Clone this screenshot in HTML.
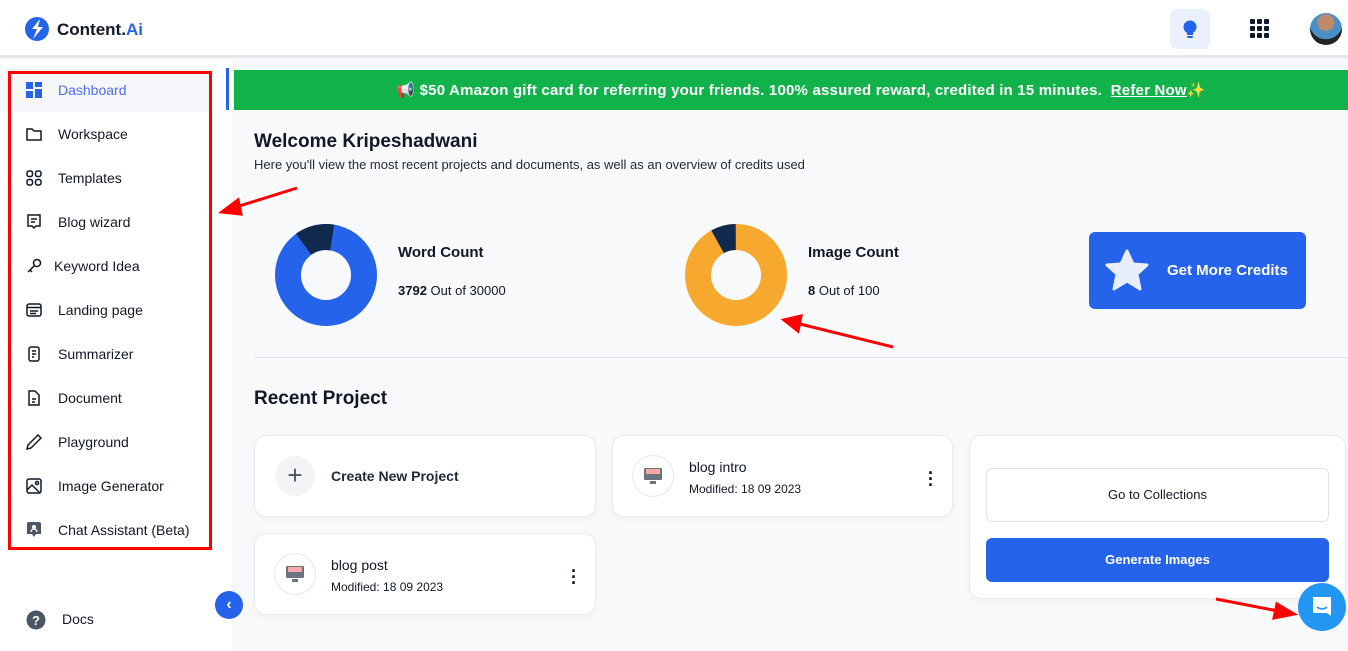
<!DOCTYPE html>
<html><head><style>
*{box-sizing:border-box;margin:0;padding:0}
body{width:1348px;height:651px;overflow:hidden;font-family:"Liberation Sans",sans-serif;background:#f8f9fb;position:relative;color:#111827}
.abs{position:absolute}
.hdr{left:0;top:0;width:1348px;height:58px;background:#fff;border-bottom:3px solid #e5e7eb}
.side{left:0;top:60px;width:234px;height:591px;background:#fff;border-right:1px solid #eceef2}
.nav{position:absolute;left:0;width:212px;height:44px;display:flex;align-items:center;font-size:14px;color:#111827}
.nav svg{position:absolute;left:26px}
.nav span{position:absolute;left:58px}
.card{background:#fff;border:1px solid #e8eaee;border-radius:12px;box-shadow:0 2px 8px rgba(0,0,0,.04)}
.ic{width:42px;height:42px;border-radius:50%;border:1px solid #e5e7eb;background:#fff}
</style></head><body>
<div class="abs hdr"></div>
<svg class="abs" style="left:24px;top:16px" width="26" height="26" viewBox="0 0 26 26"><circle cx="13" cy="13" r="12" fill="#2563eb"/><path d="M16 3 L8 13 L13 13 L9 23 L19 11 L14 11 Z" fill="#fff"/></svg>
<div class="abs" style="left:57px;top:20px;font-size:17px;font-weight:bold;color:#111827">Content.<span style="color:#2563eb">Ai</span></div>
<div class="abs" style="left:1170px;top:9px;width:40px;height:40px;border-radius:7px;background:#eaf0fd"></div>
<svg class="abs" style="left:1181px;top:19px" width="18" height="20" viewBox="0 0 18 20"><circle cx="9" cy="8" r="6.5" fill="#2563eb"/><rect x="6" y="12" width="6" height="4" fill="#2563eb"/><rect x="6" y="17" width="6" height="2" rx="1" fill="#2563eb"/></svg>
<svg class="abs" style="left:1250px;top:19px" width="20" height="20"><g fill="#111827"><rect x="0" y="0" width="5" height="5" rx="1"/><rect x="7" y="0" width="5" height="5" rx="1"/><rect x="14" y="0" width="5" height="5" rx="1"/><rect x="0" y="7" width="5" height="5" rx="1"/><rect x="7" y="7" width="5" height="5" rx="1"/><rect x="14" y="7" width="5" height="5" rx="1"/><rect x="0" y="14" width="5" height="5" rx="1"/><rect x="7" y="14" width="5" height="5" rx="1"/><rect x="14" y="14" width="5" height="5" rx="1"/></g></svg>
<div class="abs" style="left:1310px;top:13px;width:32px;height:32px;border-radius:50%;background:radial-gradient(circle at 50% 30%,#c08a6a 0 30%,#4a90c8 31% 60%,#222 61%)"></div>

<div class="abs side"></div>
<div class="abs" style="left:0;top:68px;width:212px;height:44px;background:#f6f7fa"></div>
<div class="nav" style="top:68px"><svg width="16" height="16"><rect x="0" y="0" width="7" height="7" fill="#2563eb"/><rect x="9" y="0" width="7" height="5" fill="#2563eb"/><rect x="0" y="9" width="7" height="7" fill="#2563eb"/><rect x="9" y="7" width="7" height="9" fill="#2563eb"/></svg><span style="color:#4f6bed">Dashboard</span></div>
<div class="nav" style="top:112px"><svg width="16" height="16" fill="none" stroke="#111827" stroke-width="1.5"><path d="M1 3h5l2 2h7v9H1z"/></svg><span>Workspace</span></div>
<div class="nav" style="top:156px"><svg width="16" height="16" fill="none" stroke="#111827" stroke-width="1.5"><rect x="1" y="1" width="5.5" height="5.5" rx="2"/><rect x="9.5" y="1" width="5.5" height="5.5" rx="2"/><rect x="1" y="9.5" width="5.5" height="5.5" rx="2"/><rect x="9.5" y="9.5" width="5.5" height="5.5" rx="2"/></svg><span>Templates</span></div>
<div class="nav" style="top:200px"><svg width="16" height="16" fill="none" stroke="#111827" stroke-width="1.5"><path d="M2 1h12v11H10l-2 2-2-2H2z M5 5h6 M5 8h4"/></svg><span>Blog wizard</span></div>
<div class="nav" style="top:244px"><svg width="16" height="16" fill="none" stroke="#111827" stroke-width="1.5"><circle cx="11" cy="5" r="3.5"/><path d="M8.5 7.5 L2 14 M4 12 l2 2"/></svg><span style="left:54px">Keyword Idea</span></div>
<div class="nav" style="top:288px"><svg width="16" height="16" fill="none" stroke="#111827" stroke-width="1.5"><rect x="1" y="2" width="14" height="12" rx="2"/><path d="M1 5.5h14 M4 9h8 M4 11.5h6"/></svg><span>Landing page</span></div>
<div class="nav" style="top:332px"><svg width="16" height="16" fill="none" stroke="#111827" stroke-width="1.5"><rect x="3" y="1" width="10" height="14" rx="2"/><path d="M6 5h4 M6 8h4 M6 11h2"/></svg><span>Summarizer</span></div>
<div class="nav" style="top:376px"><svg width="16" height="16" fill="none" stroke="#111827" stroke-width="1.5"><path d="M3 1h6l4 4v10H3z M6 9h4 M6 12h3"/></svg><span>Document</span></div>
<div class="nav" style="top:420px"><svg width="16" height="16" fill="none" stroke="#111827" stroke-width="1.5"><path d="M12 1l3 3-10 10-4 1 1-4z"/></svg><span>Playground</span></div>
<div class="nav" style="top:464px"><svg width="16" height="16" fill="none" stroke="#111827" stroke-width="1.5"><rect x="1" y="1" width="14" height="14" rx="2"/><circle cx="11" cy="5" r="1.5"/><path d="M1 12l5-5 8 8"/></svg><span>Image Generator</span></div>
<div class="nav" style="top:508px"><svg width="16" height="16"><path d="M1 2a2 2 0 0 1 2-2h10a2 2 0 0 1 2 2v10H10l-2 3-2-3H1z" fill="#4b5563"/><circle cx="8" cy="5" r="2" fill="#fff"/><path d="M5 10a3 3 0 0 1 6 0" stroke="#fff" fill="none" stroke-width="1.3"/></svg><span>Chat Assistant (Beta)</span></div>
<svg class="abs" style="left:26px;top:610px" width="20" height="20"><circle cx="10" cy="10" r="9.5" fill="#4b5563"/><text x="10" y="15" text-anchor="middle" fill="#fff" font-size="13" font-weight="bold" font-family="Liberation Sans">?</text></svg>
<div class="abs" style="left:62px;top:611px;font-size:14px">Docs</div>
<div class="abs" style="left:215px;top:591px;width:28px;height:28px;border-radius:50%;background:#2563eb;color:#fff;font-size:16px;font-weight:bold;text-align:center;line-height:27px">‹</div>

<div class="abs" style="left:226px;top:68px;width:3px;height:42px;background:#2563eb"></div>
<div class="abs" style="left:234px;top:70px;width:1114px;height:40px;background:#12b24b;color:#fff;font-size:15px;font-weight:bold;text-align:center;line-height:41px;letter-spacing:0.2px;padding-left:20px">📢 $50 Amazon gift card for referring your friends. 100% assured reward, credited in 15 minutes. &nbsp;<u>Refer Now</u>✨</div>

<div class="abs" style="left:254px;top:131px;font-size:19px;font-weight:bold">Welcome Kripeshadwani</div>
<div class="abs" style="left:254px;top:157px;font-size:13px;color:#1f2937">Here you'll view the most recent projects and documents, as well as an overview of credits used</div>

<svg class="abs" style="left:274px;top:223px" width="104" height="104" viewBox="0 0 104 104"><circle cx="52" cy="52" r="38" fill="none" stroke="#2563eb" stroke-width="26"/><circle cx="52" cy="52" r="38" fill="none" stroke="#0f2a4d" stroke-width="26" stroke-dasharray="30 300" transform="rotate(-126 52 52)"/></svg>
<div class="abs" style="left:398px;top:244px;font-size:15px;font-weight:bold">Word Count</div>
<div class="abs" style="left:398px;top:283px;font-size:13px"><b>3792</b> Out of 30000</div>
<svg class="abs" style="left:684px;top:223px" width="104" height="104" viewBox="0 0 104 104"><circle cx="52" cy="52" r="38" fill="none" stroke="#f6a82f" stroke-width="26"/><circle cx="52" cy="52" r="38" fill="none" stroke="#0f2a4d" stroke-width="26" stroke-dasharray="19 300" transform="rotate(-119 52 52)"/></svg>
<div class="abs" style="left:808px;top:244px;font-size:15px;font-weight:bold">Image Count</div>
<div class="abs" style="left:808px;top:283px;font-size:13px"><b>8</b> Out of 100</div>
<div class="abs" style="left:1089px;top:232px;width:217px;height:77px;background:#2563eb;border-radius:6px"></div>
<svg class="abs" style="left:1104px;top:248px" width="46" height="46" viewBox="0 0 46 46"><path d="M23 3l6 13 14 1-10 9 3 15-13-8-13 8 3-15L3 17l14-1z" fill="#e8eefc" stroke="#e8eefc" stroke-width="3" stroke-linejoin="round"/></svg>
<div class="abs" style="left:1167px;top:262px;font-size:15px;font-weight:bold;color:#fff">Get More Credits</div>
<div class="abs" style="left:254px;top:357px;width:1094px;height:1px;background:#e2e4e8"></div>

<div class="abs" style="left:254px;top:388px;font-size:19px;font-weight:bold">Recent Project</div>
<div class="abs card" style="left:254px;top:435px;width:342px;height:82px"></div>
<div class="abs" style="left:275px;top:456px;width:40px;height:40px;border-radius:50%;background:#f3f4f6;text-align:center;line-height:38px;font-size:26px;color:#4b5563">+</div>
<div class="abs" style="left:331px;top:468px;font-size:14px;font-weight:bold;color:#1f2937">Create New Project</div>
<div class="abs card" style="left:612px;top:435px;width:341px;height:82px"></div>
<div class="abs ic" style="left:632px;top:455px"></div>
<svg class="abs" style="left:643px;top:466px" width="20" height="20"><rect x="1" y="2" width="18" height="12" rx="1" fill="#6b7280"/><rect x="3" y="3" width="14" height="5" fill="#f9a8a8"/><rect x="7" y="15" width="6" height="3" fill="#6b7280"/></svg>
<div class="abs" style="left:689px;top:459px;font-size:14px">blog intro</div>
<div class="abs" style="left:689px;top:482px;font-size:12px">Modified: 18 09 2023</div>
<div class="abs" style="left:928px;top:470px;font-size:18px;font-weight:bold;line-height:6px;width:10px">·<br>·<br>·</div>
<div class="abs card" style="left:254px;top:533px;width:342px;height:82px"></div>
<div class="abs ic" style="left:274px;top:553px"></div>
<svg class="abs" style="left:285px;top:564px" width="20" height="20"><rect x="1" y="2" width="18" height="12" rx="1" fill="#6b7280"/><rect x="3" y="3" width="14" height="5" fill="#f9a8a8"/><rect x="7" y="15" width="6" height="3" fill="#6b7280"/></svg>
<div class="abs" style="left:331px;top:557px;font-size:14px">blog post</div>
<div class="abs" style="left:331px;top:580px;font-size:12px">Modified: 18 09 2023</div>
<div class="abs" style="left:571px;top:568px;font-size:18px;font-weight:bold;line-height:6px;width:10px">·<br>·<br>·</div>

<div class="abs card" style="left:969px;top:435px;width:377px;height:164px"></div>
<div class="abs" style="left:986px;top:468px;width:343px;height:54px;border:1px solid #e0e2e6;border-radius:6px;background:#fff;text-align:center;line-height:52px;font-size:13px">Go to Collections</div>
<div class="abs" style="left:986px;top:538px;width:343px;height:44px;border-radius:6px;background:#2563eb;text-align:center;line-height:44px;font-size:13px;font-weight:bold;color:#fff">Generate Images</div>
<div class="abs" style="left:1298px;top:583px;width:48px;height:48px;border-radius:50%;background:#2196f3"></div>
<svg class="abs" style="left:1310px;top:595px" width="24" height="24"><path d="M3 2h18v19l-4-3H3z" fill="#fff"/><path d="M7 12q5 4 10 0" stroke="#2196f3" stroke-width="1.5" fill="none"/></svg>

<div class="abs" style="left:8px;top:71px;width:204px;height:479px;border:3px solid #f00"></div>
<svg class="abs" style="left:0;top:0" width="1348" height="651"><g stroke="#f00" stroke-width="3" fill="#f00">
<line x1="297" y1="188" x2="236" y2="207"/><polygon points="222,212 238,200 241,214"/>
<line x1="893" y1="347" x2="800" y2="324"/><polygon points="784,320 801,316 798,331"/>
<line x1="1216" y1="599" x2="1278" y2="611"/><polygon points="1294,614 1277,604 1274,618"/>
</g></svg>
</body></html>
